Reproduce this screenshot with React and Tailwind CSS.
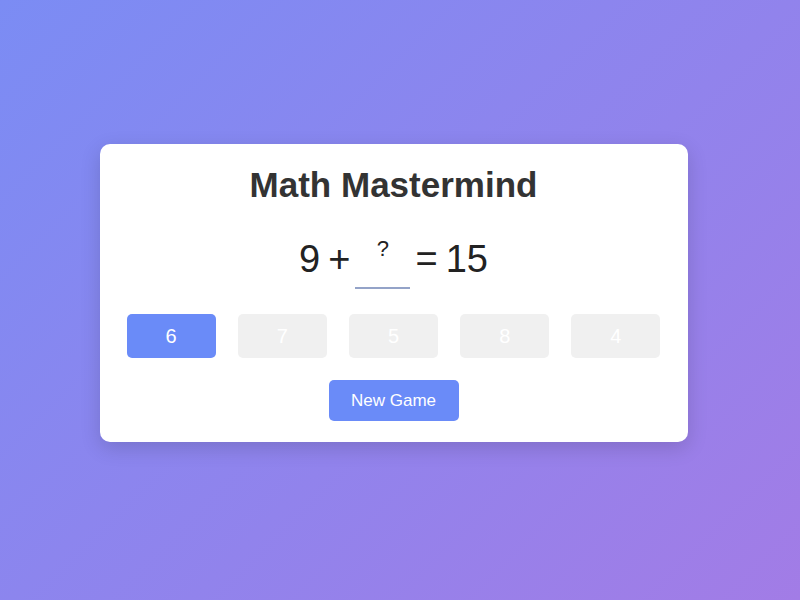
export default function App() {
  const nums = [6, 7, 5, 8, 4];
  return (
    <div
      className="w-full h-[600px] flex items-center justify-center pr-[13px] pb-[14px] bg-[linear-gradient(135deg,#7b8cf4_0%,#a27ce6_100%)]"
      style={{ fontFamily: '"Liberation Sans", Arial, sans-serif' }}
    >
      <div className="w-[588px] bg-white rounded-[10px] shadow-[0_6px_20px_rgba(0,0,0,0.15)] pt-[21px] pb-[21px] px-[27px] flex flex-col items-center">
        <h1 className="text-[35px] leading-[40px] font-bold text-[#333]">Math Mastermind</h1>
        <div className="mt-[31px] flex items-start justify-center text-[38px] leading-[46px] text-[#222]">
          <span>9</span>
          <span className="ml-[8px]">+</span>
          <div className="mx-[5px] w-[55px] h-[53px] border-b-2 border-[#94a3c8] flex justify-center">
            <span className="text-[22px] leading-[26px]">?</span>
          </div>
          <span>=</span>
          <span className="ml-[8px]">15</span>
        </div>
        <div className="mt-[25px] w-full grid grid-cols-5 gap-[22px]">
          {nums.map((n, i) => (
            <button
              key={n}
              className={
                i === 0
                  ? "h-[44px] rounded-[5px] bg-[#6a8bf8] text-white text-[20px]"
                  : "h-[44px] rounded-[5px] bg-[#f0f0f0] text-white text-[20px]"
              }
            >
              {n}
            </button>
          ))}
        </div>
        <button className="mt-[22px] w-[130px] h-[41px] rounded-[5px] bg-[#6a8bf8] text-white text-[17px]">
          New Game
        </button>
      </div>
    </div>
  );
}
